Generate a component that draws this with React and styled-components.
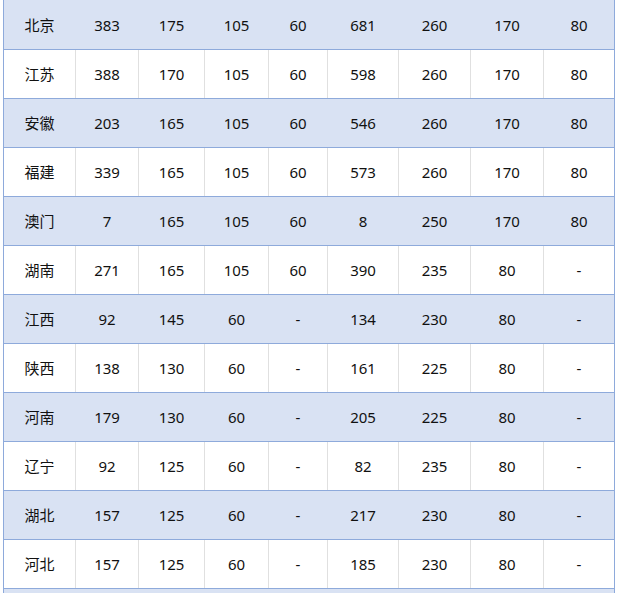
import React from 'react';
import styled, { createGlobalStyle } from 'styled-components';

const GlobalStyle = createGlobalStyle`
  html, body {
    margin: 0;
    padding: 0;
    background: #fff;
    overflow: hidden;
  }
`;

const columns = '72px 63px 66px 64px 59px 71px 72px 73px 70px';

const Viewport = styled.div`
  height: 593px;
  overflow: hidden;
`;

const Table = styled.div`
  margin-left: 3px;
  width: 612px;
  box-sizing: border-box;
  border-left: 1px solid #8eaadb;
  border-right: 1px solid #8eaadb;
  font-family: "Noto Sans", "Noto Sans CJK SC", sans-serif;
  font-size: 15px;
  color: #111;
`;

const Row = styled.div`
  display: grid;
  grid-template-columns: ${columns};
  height: 49px;
  box-sizing: border-box;
  border-top: 1px solid #8eaadb;
  background: ${p => (p.$shaded ? '#d9e2f3' : '#fff')};

  &:first-child {
    border-top-color: transparent;
  }
`;

const Cell = styled.div`
  display: flex;
  align-items: center;
  justify-content: center;
  padding-bottom: 1px;
  box-sizing: border-box;
  border-right: 1px solid ${p => (p.$shaded ? '#d9e2f3' : '#e0e0e0')};

  &:last-child {
    border-right: none;
  }
`;

const rows = [
  ['北京', '383', '175', '105', '60', '681', '260', '170', '80'],
  ['江苏', '388', '170', '105', '60', '598', '260', '170', '80'],
  ['安徽', '203', '165', '105', '60', '546', '260', '170', '80'],
  ['福建', '339', '165', '105', '60', '573', '260', '170', '80'],
  ['澳门', '7', '165', '105', '60', '8', '250', '170', '80'],
  ['湖南', '271', '165', '105', '60', '390', '235', '80', '-'],
  ['江西', '92', '145', '60', '-', '134', '230', '80', '-'],
  ['陕西', '138', '130', '60', '-', '161', '225', '80', '-'],
  ['河南', '179', '130', '60', '-', '205', '225', '80', '-'],
  ['辽宁', '92', '125', '60', '-', '82', '235', '80', '-'],
  ['湖北', '157', '125', '60', '-', '217', '230', '80', '-'],
  ['河北', '157', '125', '60', '-', '185', '230', '80', '-'],
  ['', '', '', '', '', '', '', '', ''],
];

const App = () => (
  <Viewport>
    <GlobalStyle />
    <Table>
      {rows.map((row, i) => (
        <Row key={i} $shaded={i % 2 === 0}>
          {row.map((value, j) => (
            <Cell key={j} $shaded={i % 2 === 0}>{value}</Cell>
          ))}
        </Row>
      ))}
    </Table>
  </Viewport>
);

export default App;
